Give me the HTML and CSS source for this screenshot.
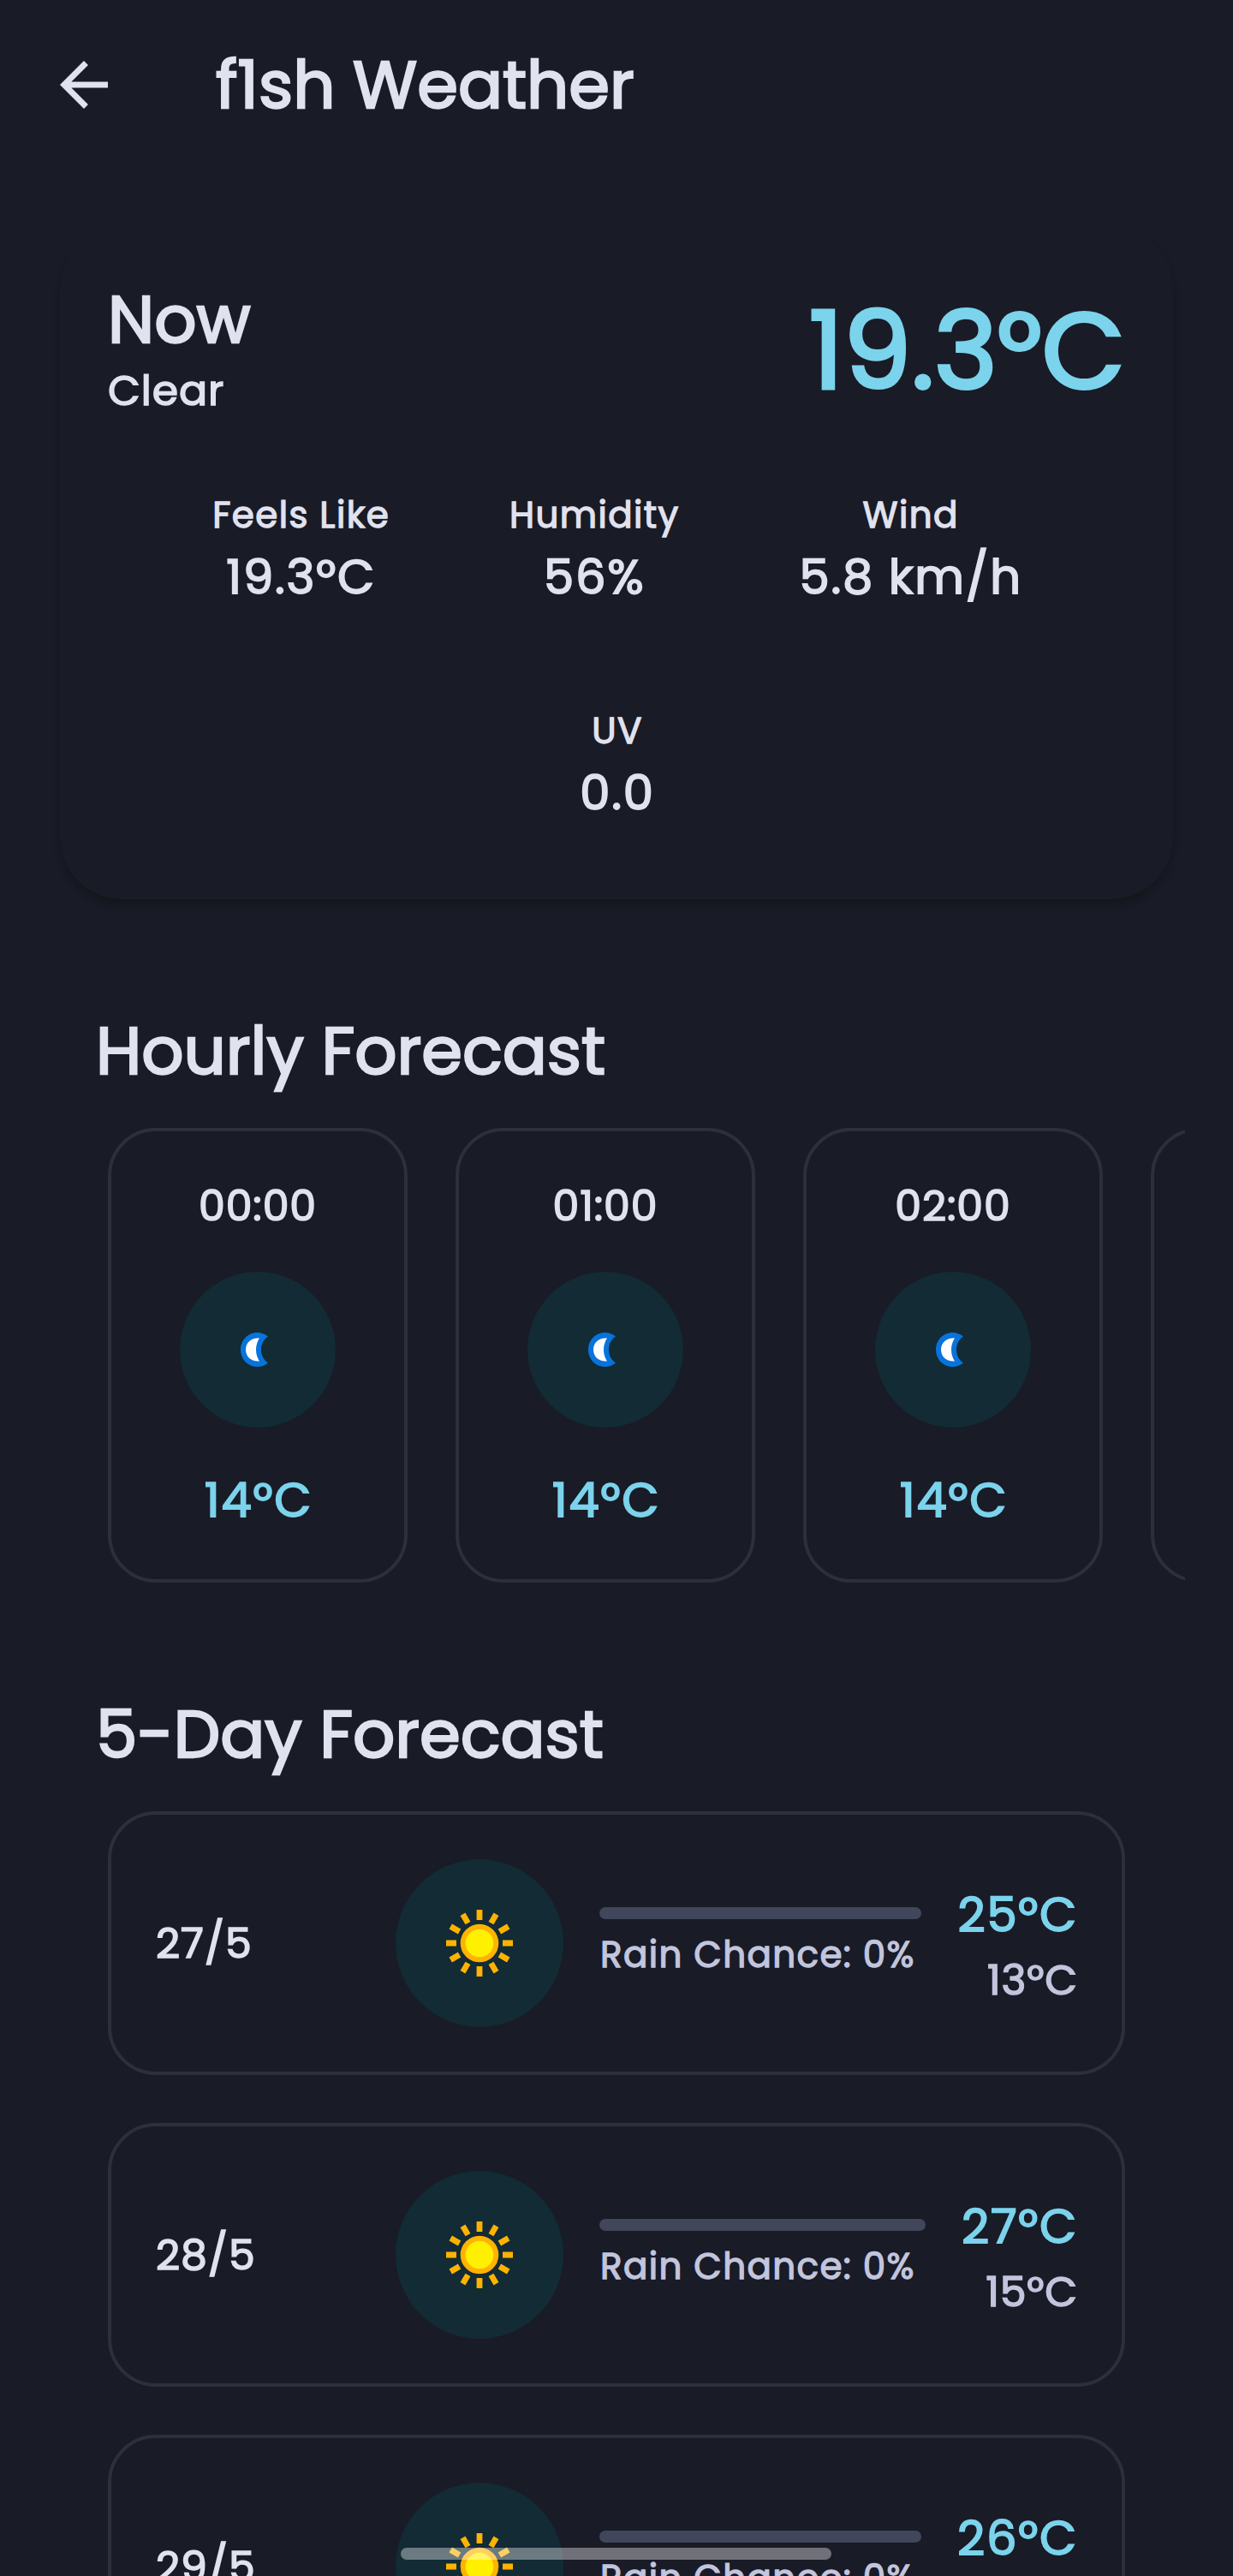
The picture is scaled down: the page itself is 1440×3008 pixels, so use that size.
FILE: index.html
```html
<!DOCTYPE html>
<html lang="en">
<head>
<meta charset="utf-8">
<title>f1sh Weather</title>
<link rel="stylesheet" href="styles.css">
</head>
<body>
<svg class="defs" aria-hidden="true">
  <symbol id="moon" viewBox="0 0 32 40">
    <path fill="#0873db" d="M32 4.500C28 1.500 24 0 19.500 0 8.500 0 0 9 0 20s8.500 20 19.500 20c4.500 0 8.500-1.500 12.500-4.500C26.500 31.500 24 26 24 20S26.500 8.500 32 4.500z"/>
    <path fill="#fff" d="M22 6.500C12 6 6 12 6 20s6 14 16 13.500C19.500 29.500 18 25 18 20s1.500-9.500 4-13.500z"/>
  </symbol>
  <symbol id="sun" viewBox="-40 -40 80 80">
    <circle r="19.300" fill="#fff000" stroke="#ffb300" stroke-width="6"/>
    <g stroke="#ffb300" stroke-width="6.800">
      <path d="M0-27V-39M0 27V39M-27 0H-39M27 0H39"/>
      <path d="M0-27V-39M0 27V39M-27 0H-39M27 0H39" transform="rotate(30)"/>
      <path d="M0-27V-39M0 27V39M-27 0H-39M27 0H39" transform="rotate(60)"/>
    </g>
  </symbol>
</svg>
<div class="screen">
  <header class="app-bar">
    <svg class="back" viewBox="0 0 24 24"><path d="M20 11H7.830l5.590-5.590L12 4l-8 8 8 8 1.410-1.410L7.830 13H20v-2z"/></svg>
    <h1 class="app-title">f1sh Weather</h1>
  </header>

  <section class="now">
    <div class="now-head">
      <div>
        <h2 class="now-title">Now</h2>
        <p class="now-condition">Clear</p>
      </div>
      <p class="now-temp">19.3°C</p>
    </div>
    <div class="stats">
      <div class="stat"><span class="label">Feels Like</span><span class="value">19.3°C</span></div>
      <div class="stat"><span class="label">Humidity</span><span class="value">56%</span></div>
      <div class="stat"><span class="label">Wind</span><span class="value">5.8 km/h</span></div>
      <div class="stat"><span class="label">UV</span><span class="value">0.0</span></div>
    </div>
  </section>

  <h2 class="section-title">Hourly Forecast</h2>
  <div class="hours">
    <article class="hour"><span class="time">00:00</span><span class="disc"><svg class="moon"><use href="#moon"/></svg></span><span class="hour-temp">14°C</span></article>
    <article class="hour"><span class="time">01:00</span><span class="disc"><svg class="moon"><use href="#moon"/></svg></span><span class="hour-temp">14°C</span></article>
    <article class="hour"><span class="time">02:00</span><span class="disc"><svg class="moon"><use href="#moon"/></svg></span><span class="hour-temp">14°C</span></article>
    <article class="hour"></article>
  </div>

  <h2 class="section-title">5-Day Forecast</h2>
  <div class="days">
    <article class="day">
      <span class="date">27/5</span>
      <span class="disc large"><svg class="sun"><use href="#sun"/></svg></span>
      <div class="rain"><div class="track"></div><span class="rain-text">Rain Chance: 0%</span></div>
      <div class="temps"><span class="high">25°C</span><span class="low">13°C</span></div>
    </article>
    <article class="day">
      <span class="date">28/5</span>
      <span class="disc large"><svg class="sun"><use href="#sun"/></svg></span>
      <div class="rain"><div class="track"></div><span class="rain-text">Rain Chance: 0%</span></div>
      <div class="temps"><span class="high">27°C</span><span class="low">15°C</span></div>
    </article>
    <article class="day">
      <span class="date">29/5</span>
      <span class="disc large"><svg class="sun"><use href="#sun"/></svg></span>
      <div class="rain"><div class="track"></div><span class="rain-text">Rain Chance: 0%</span></div>
      <div class="temps"><span class="high">26°C</span><span class="low">14°C</span></div>
    </article>
  </div>
  <div class="home-indicator"></div>
</div>
</body>
</html>
```

FILE: styles.css
```css
/* The regular weight is emboldened by a thin outline of 1/32 em. */
* { box-sizing: border-box; margin: 0; padding: 0; -webkit-text-stroke-width: .03125em; }

body {
  background: #191b26;
  color: #e1e2ef;
  font-family: Poppins, Inter, sans-serif;
  font-weight: 400;
}

.defs { position: absolute; width: 0; height: 0; }

.screen {
  position: relative;
  width: 1440px;
  height: 3008px;
  overflow: hidden;
}

.app-bar {
  display: flex;
  align-items: center;
  gap: 112px;
  padding: 41px 56px 0;
}
.back { width: 84px; height: 84px; fill: #e1e2ef; }
.app-title { font-size: 77px; line-height: 116px; font-weight: 400; }

.now {
  margin: 107px 70px 0;
  padding: 59px 56px 84px;
  border-radius: 72px;
  background: #191b26;
  box-shadow: 0 8px 9px -2px rgba(10, 18, 14, .42);
}
.now-head { display: flex; justify-content: space-between; align-items: center; }
.now-title { font-size: 77px; line-height: 100px; font-weight: 400; }
.now-condition { font-size: 49px; line-height: 67px; letter-spacing: .875px; }
.now-temp {
  color: #7bd3ec;
  padding-top: 5px;
  font-size: 126px;
  line-height: 162px;
}

.stats {
  display: flex;
  flex-wrap: wrap;
  justify-content: center;
  gap: 108px 140px;
  margin-top: 80px;
  padding: 0 55px 0 57px;
}
.stat { display: flex; flex-direction: column; align-items: center; }
.label { font-size: 42px; line-height: 64px; letter-spacing: 1.4px; }
.value { font-size: 56px; line-height: 80px; letter-spacing: 1.75px; }

.section-title {
  margin-top: 119px;
  padding-left: 112px;
  font-size: 77px;
  line-height: 116px;
  font-weight: 400;
}

.hours {
  display: flex;
  gap: 56px;
  margin: 32px 56px 0;
  padding-left: 70px;
  overflow: hidden;
}
.hour {
  flex: 0 0 350px;
  height: 531px;
  display: flex;
  flex-direction: column;
  align-items: center;
  padding-top: 50px;
  border: 4px solid #2d2f3b;
  border-radius: 56px;
}
.time { font-size: 49px; line-height: 74px; letter-spacing: .875px; }
.hour-temp { padding-left: 2px; color: #7bd3ec; font-size: 56px; line-height: 84px; letter-spacing: 1.75px; }

.disc {
  display: flex;
  align-items: center;
  justify-content: center;
  width: 182px;
  height: 182px;
  margin: 40px 0 43px;
  border-radius: 50%;
  background: #122b35;
}
.disc.large { width: 196px; height: 196px; margin: 0 42px 0 0; flex: none; }
.moon { width: 32px; height: 40px; margin-right: 8px; }
.sun { width: 80px; height: 80px; }

.days {
  display: flex;
  flex-direction: column;
  gap: 56px;
  margin: 32px 126px 0;
}
.day {
  display: flex;
  align-items: center;
  height: 308px;
  padding: 0 51px 0 52px;
  border: 4px solid #2d2f3b;
  border-radius: 56px;
}
.date { width: 280px; font-size: 49px; line-height: 74px; letter-spacing: .875px; }
.rain { flex: 1; min-width: 0; padding-top: 1px; white-space: nowrap; }
.track { height: 14px; margin-bottom: 12px; border-radius: 7px; background: #41465a; }
.rain-text { display: block; padding-left: 1px; color: #c2c5dd; font-size: 42px; line-height: 60px; letter-spacing: 1.4px; }
.temps {
  display: flex;
  flex-direction: column;
  align-items: flex-end;
  margin-left: 42px;
  padding-top: 4px;
}
.high { color: #7bd3ec; font-size: 56px; line-height: 81px; letter-spacing: 1.75px; }
.low { color: #c2c5dd; font-size: 49px; line-height: 72px; letter-spacing: .875px; }

.home-indicator {
  position: absolute;
  left: 468px;
  top: 2975px;
  width: 503px;
  height: 14px;
  border-radius: 7px;
  background: rgba(255, 255, 255, .38);
}
```
